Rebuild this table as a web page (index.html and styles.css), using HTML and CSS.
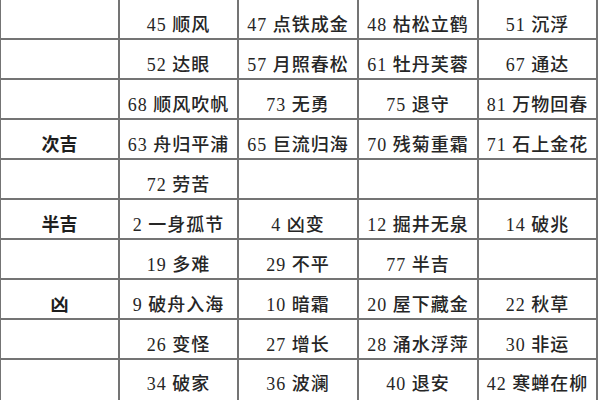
FILE: index.html
```html
<!DOCTYPE html>
<html lang="zh">
<head>
<meta charset="utf-8">
<link rel="stylesheet" href="styles.css">
</head>
<body>
<div class="grid">
  <div class="cell"></div><div class="cell">45 顺风</div><div class="cell">47 点铁成金</div><div class="cell">48 枯松立鹤</div><div class="cell">51 沉浮</div>
  <div class="cell"></div><div class="cell">52 达眼</div><div class="cell">57 月照春松</div><div class="cell">61 牡丹芙蓉</div><div class="cell">67 通达</div>
  <div class="cell"></div><div class="cell">68 顺风吹帆</div><div class="cell">73 无勇</div><div class="cell">75 退守</div><div class="cell">81 万物回春</div>
  <div class="cell cat">次吉</div><div class="cell">63 舟归平浦</div><div class="cell">65 巨流归海</div><div class="cell">70 残菊重霜</div><div class="cell">71 石上金花</div>
  <div class="cell"></div><div class="cell">72 劳苦</div><div class="cell"></div><div class="cell"></div><div class="cell"></div>
  <div class="cell cat">半吉</div><div class="cell">2 一身孤节</div><div class="cell">4 凶变</div><div class="cell">12 掘井无泉</div><div class="cell">14 破兆</div>
  <div class="cell"></div><div class="cell">19 多难</div><div class="cell">29 不平</div><div class="cell">77 半吉</div><div class="cell"></div>
  <div class="cell cat">凶</div><div class="cell">9 破舟入海</div><div class="cell">10 暗霜</div><div class="cell">20 屋下藏金</div><div class="cell">22 秋草</div>
  <div class="cell"></div><div class="cell">26 变怪</div><div class="cell">27 增长</div><div class="cell">28 涌水浮萍</div><div class="cell">30 非运</div>
  <div class="cell"></div><div class="cell">34 破家</div><div class="cell">36 波澜</div><div class="cell">40 退安</div><div class="cell">42 寒蝉在柳</div>
</div>
</body>
</html>
```
FILE: styles.css
```css
html, body {
  margin: 0;
  padding: 0;
  background: #ffffff;
  overflow: hidden;
}
.grid {
  display: grid;
  grid-template-columns: 117px 117px 118px 118px 117px;
  grid-template-rows: repeat(9, 38px) 44px;
  gap: 2px;
  padding: 1px 2px 2px 1px;
  margin-top: -1px;
  width: max-content;
  background: #747474;
}
.cell {
  background: #ffffff;
  display: flex;
  align-items: center;
  justify-content: center;
  padding-top: 7px;
  box-sizing: border-box;
  font-family: "Liberation Serif", "Noto Sans CJK SC", serif;
  font-size: 18px;
  font-weight: 500;
  letter-spacing: 1px;
  color: #262626;
  white-space: nowrap;
}
.grid .cell:nth-last-child(-n+5) {
  padding-top: 0;
  padding-bottom: 0;
}
.cat {
  font-family: "Noto Sans CJK SC", sans-serif;
  font-weight: 700;
  color: #1e1e1e;
  letter-spacing: 0;
}
```
